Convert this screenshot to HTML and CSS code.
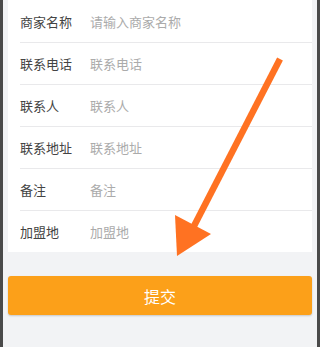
FILE: index.html
```html
<!DOCTYPE html>
<html lang="zh">
<head>
<meta charset="utf-8">
<link rel="stylesheet" href="styles.css">
</head>
<body>
<div class="screen">
  <div class="card">
    <div class="row"><span class="label">商家名称</span><span class="ph">请输入商家名称</span></div>
    <div class="row"><span class="label">联系电话</span><span class="ph">联系电话</span></div>
    <div class="row"><span class="label">联系人</span><span class="ph">联系人</span></div>
    <div class="row"><span class="label">联系地址</span><span class="ph">联系地址</span></div>
    <div class="row"><span class="label">备注</span><span class="ph">备注</span></div>
    <div class="row"><span class="label">加盟地</span><span class="ph">加盟地</span></div>
  </div>
  <div class="btn">提交</div>
  <svg class="arrow" width="320" height="347" viewBox="0 0 320 347">
    <line x1="280" y1="59" x2="194" y2="226" stroke="#ff7222" stroke-width="6.5"/>
    <polygon points="175,215 211,234 177,256" fill="#ff7222"/>
  </svg>
</div>
</body>
</html>
```
FILE: styles.css
```css
html, body {
  margin: 0;
  padding: 0;
}
body {
  width: 320px;
  height: 347px;
  overflow: hidden;
  font-family: "Noto Sans CJK SC", "Noto Sans", sans-serif;
}
.screen {
  position: relative;
  box-sizing: border-box;
  width: 320px;
  height: 347px;
  background: #f2f3f5;
  border-left: 3px solid #4a4a4a;
  border-right: 3px solid #4a4a4a;
  padding: 0 5px;
}
.card {
  background: #fff;
  padding-top: 1px;
}
.row {
  display: flex;
  align-items: center;
  height: 41px;
  margin-left: 12px;
  font-size: 13px;
  line-height: 1;
}
.row + .row {
  border-top: 1px solid #e9e9eb;
}
.label {
  width: 70px;
  color: #444;
}
.ph {
  color: #ababab;
}
.btn {
  margin-top: 24px;
  height: 39px;
  display: flex;
  align-items: center;
  justify-content: center;
  background: #fca019;
  border-radius: 3px;
  box-shadow: 0 1px 2px rgba(0, 0, 0, 0.18);
  color: #fff;
  font-size: 16px;
}
.arrow {
  position: absolute;
  left: -3px;
  top: 0;
}
```
